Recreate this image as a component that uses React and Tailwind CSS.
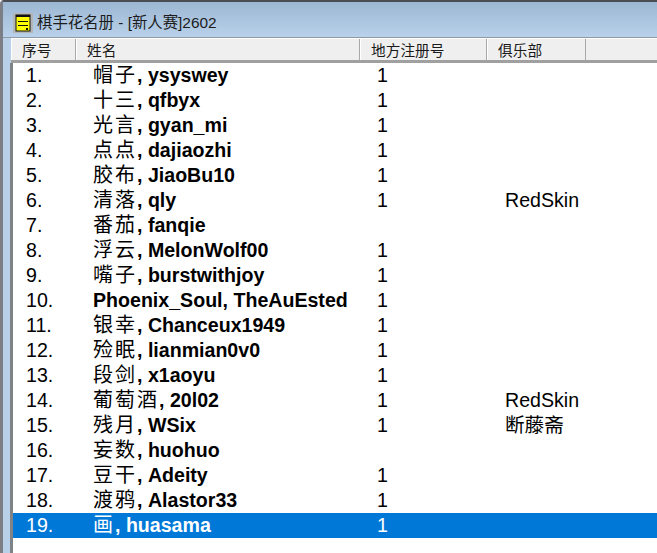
const rows = [
  ['帽子', ', ysyswey', '1', ''],
  ['十三', ', qfbyx', '1', ''],
  ['光言', ', gyan_mi', '1', ''],
  ['点点', ', dajiaozhi', '1', ''],
  ['胶布', ', JiaoBu10', '1', ''],
  ['清落', ', qly', '1', 'RedSkin'],
  ['番茄', ', fanqie', '', ''],
  ['浮云', ', MelonWolf00', '1', ''],
  ['嘴子', ', burstwithjoy', '1', ''],
  ['', 'Phoenix_Soul, TheAuEsted', '1', ''],
  ['银幸', ', Chanceux1949', '1', ''],
  ['殓眠', ', lianmian0v0', '1', ''],
  ['段剑', ', x1aoyu', '1', ''],
  ['葡萄酒', ', 20l02', '1', 'RedSkin'],
  ['残月', ', WSix', '1', '断藤斋'],
  ['妄数', ', huohuo', '', ''],
  ['豆干', ', Adeity', '1', ''],
  ['渡鸦', ', Alastor33', '1', ''],
  ['画', ', huasama', '1', ''],
];

const font = { fontFamily: '"Liberation Sans", "Noto Sans CJK SC", sans-serif' };

function HeaderCell({ width, label }) {
  return (
    <div className={`${width} h-full flex items-center pl-[10px] pt-[3px] text-[14.7px] text-[#1a1a1a] border-r border-l border-r-[#a8a8a8] border-l-white`}>
      {label}
    </div>
  );
}

export default function App() {
  return (
    <div className="w-[657px] h-[553px] overflow-hidden flex flex-col bg-[#b8d0e8] border-t-2 border-l-[3px] border-t-[#4a4d52] border-l-[#7b7f85] rounded-tl-[4px]" style={font}>
      <div className="h-[36px] shrink-0 flex items-center pt-[7px] pl-[10px] bg-gradient-to-b from-[#9cb7d3] to-[#b9d1ea] border-b border-[#8f9aa5]">
        <div className="w-[20px] h-[20px] bg-[#b5b5b5] flex items-center justify-center">
          <svg width="16" height="18" viewBox="0 0 16 18">
            <rect x="1" y="1" width="14" height="16" fill="#ffff00" stroke="#111" />
            <rect x="1" y="1" width="14" height="2" fill="#111" />
            <path d="M3 7.5H13M3 11.5H13" stroke="#111" fill="none" />
            <rect x="11" y="14" width="2" height="2" fill="#111" />
          </svg>
        </div>
        <span className="text-[15.4px] text-[#1c1c1c] ml-[4px]">棋手花名册 - [新人赛]2602</span>
      </div>
      <div className="flex-1 min-h-0 flex pl-[7px]">
        <div className="flex-1 min-w-0 flex flex-col">
          <div className="h-[25px] shrink-0 ml-[1px] flex bg-[#efefef] border-t border-t-white border-b-[3px] border-b-[#a0a0a0]">
            <HeaderCell width="w-[65px]" label="序号" />
            <HeaderCell width="w-[284px]" label="姓名" />
            <HeaderCell width="w-[127px]" label="地方注册号" />
            <HeaderCell width="w-[99px]" label="俱乐部" />
          </div>
          <div className="flex-1 flex flex-col bg-white border-l-[3px] border-[#7f8388]">
            {rows.map((row, i) => {
              const selected = i === rows.length - 1;
              return (
                <div key={i} className={`h-[25px] shrink-0 flex items-center text-[19.6px] ${selected ? 'bg-[#0078d7] text-white' : 'text-black'}`}>
                  <div className="w-[80px] pl-[13px]">{i + 1}.</div>
                  <div className="w-[284px] font-bold whitespace-nowrap">
                    {row[0] && <span className="font-normal text-[20px] tracking-[2px]">{row[0]}</span>}
                    {row[1]}
                  </div>
                  <div className="w-[128px]">{row[2]}</div>
                  <div className="whitespace-nowrap">{row[3]}</div>
                </div>
              );
            })}
          </div>
        </div>
      </div>
    </div>
  );
}
